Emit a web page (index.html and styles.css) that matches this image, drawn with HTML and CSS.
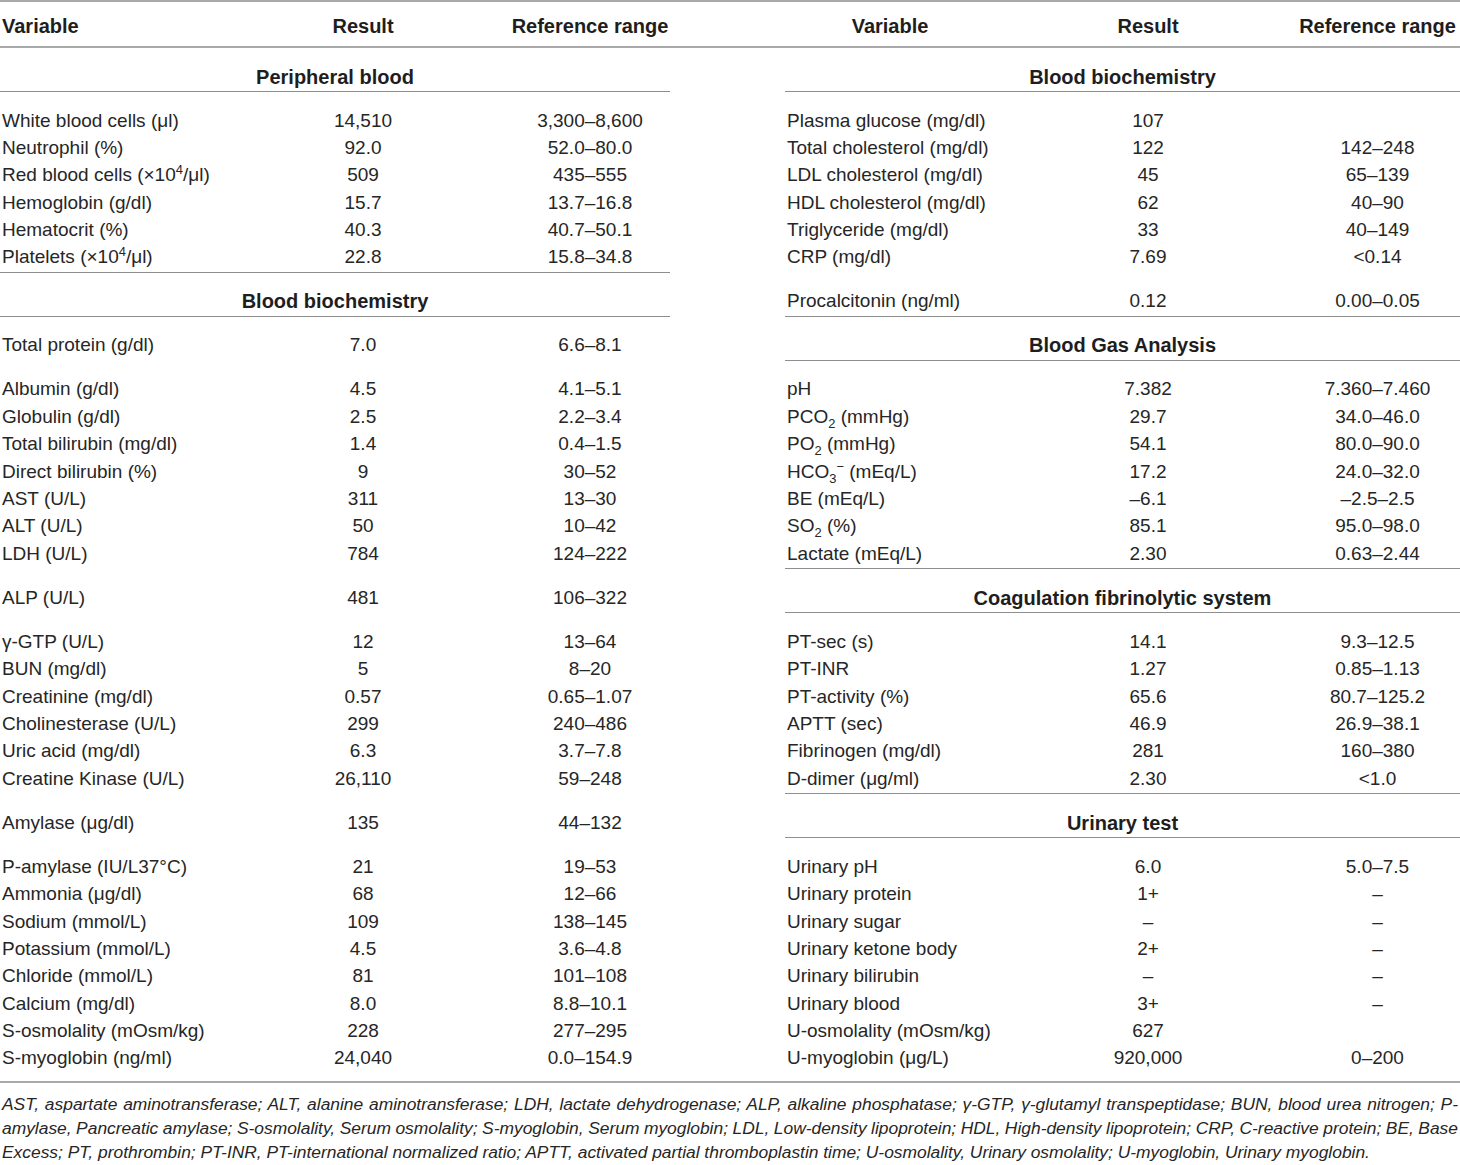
FILE: index.html
```html
<!DOCTYPE html>
<html lang="en">
<head>
<meta charset="utf-8">
<title>Laboratory findings</title>
<link rel="stylesheet" href="styles.css">
</head>
<body>
<div class="sheet">
  <div class="grid">
    <div class="row hd">
      <div class="c var">Variable</div><div class="c mid">Result</div><div class="c ref">Reference range</div>
      <div class="gap"></div>
      <div class="c var-r">Variable</div><div class="c mid">Result</div><div class="c ref">Reference range</div>
    </div>

    <div class="row t">
      <div class="c sec bb">Peripheral blood</div>
      <div class="gap"></div>
      <div class="c sec bb">Blood biochemistry</div>
    </div>

    <div class="row t">
      <div class="c var">White blood cells (μl)</div><div class="c mid">14,510</div><div class="c ref">3,300–8,600</div>
      <div class="gap"></div>
      <div class="c var">Plasma glucose (mg/dl)</div><div class="c mid">107</div><div class="c ref"></div>
    </div>
    <div class="row n">
      <div class="c var">Neutrophil (%)</div><div class="c mid">92.0</div><div class="c ref">52.0–80.0</div>
      <div class="gap"></div>
      <div class="c var">Total cholesterol (mg/dl)</div><div class="c mid">122</div><div class="c ref">142–248</div>
    </div>
    <div class="row n">
      <div class="c var">Red blood cells (×10<sup>4</sup>/μl)</div><div class="c mid">509</div><div class="c ref">435–555</div>
      <div class="gap"></div>
      <div class="c var">LDL cholesterol (mg/dl)</div><div class="c mid">45</div><div class="c ref">65–139</div>
    </div>
    <div class="row n">
      <div class="c var">Hemoglobin (g/dl)</div><div class="c mid">15.7</div><div class="c ref">13.7–16.8</div>
      <div class="gap"></div>
      <div class="c var">HDL cholesterol (mg/dl)</div><div class="c mid">62</div><div class="c ref">40–90</div>
    </div>
    <div class="row n">
      <div class="c var">Hematocrit (%)</div><div class="c mid">40.3</div><div class="c ref">40.7–50.1</div>
      <div class="gap"></div>
      <div class="c var">Triglyceride (mg/dl)</div><div class="c mid">33</div><div class="c ref">40–149</div>
    </div>
    <div class="row n">
      <div class="c var bb">Platelets (×10<sup>4</sup>/μl)</div><div class="c mid bb">22.8</div><div class="c ref bb">15.8–34.8</div>
      <div class="gap"></div>
      <div class="c var">CRP (mg/dl)</div><div class="c mid">7.69</div><div class="c ref">&lt;0.14</div>
    </div>

    <div class="row t">
      <div class="c sec bb">Blood biochemistry</div>
      <div class="gap"></div>
      <div class="c var bb">Procalcitonin (ng/ml)</div><div class="c mid bb">0.12</div><div class="c ref bb">0.00–0.05</div>
    </div>
    <div class="row t">
      <div class="c var">Total protein (g/dl)</div><div class="c mid">7.0</div><div class="c ref">6.6–8.1</div>
      <div class="gap"></div>
      <div class="c sec bb">Blood Gas Analysis</div>
    </div>
    <div class="row t">
      <div class="c var">Albumin (g/dl)</div><div class="c mid">4.5</div><div class="c ref">4.1–5.1</div>
      <div class="gap"></div>
      <div class="c var">pH</div><div class="c mid">7.382</div><div class="c ref">7.360–7.460</div>
    </div>
    <div class="row n">
      <div class="c var">Globulin (g/dl)</div><div class="c mid">2.5</div><div class="c ref">2.2–3.4</div>
      <div class="gap"></div>
      <div class="c var">PCO<sub>2</sub> (mmHg)</div><div class="c mid">29.7</div><div class="c ref">34.0–46.0</div>
    </div>
    <div class="row n">
      <div class="c var">Total bilirubin (mg/dl)</div><div class="c mid">1.4</div><div class="c ref">0.4–1.5</div>
      <div class="gap"></div>
      <div class="c var">PO<sub>2</sub> (mmHg)</div><div class="c mid">54.1</div><div class="c ref">80.0–90.0</div>
    </div>
    <div class="row n">
      <div class="c var">Direct bilirubin (%)</div><div class="c mid">9</div><div class="c ref">30–52</div>
      <div class="gap"></div>
      <div class="c var">HCO<sub>3</sub><sup>−</sup> (mEq/L)</div><div class="c mid">17.2</div><div class="c ref">24.0–32.0</div>
    </div>
    <div class="row n">
      <div class="c var">AST (U/L)</div><div class="c mid">311</div><div class="c ref">13–30</div>
      <div class="gap"></div>
      <div class="c var">BE (mEq/L)</div><div class="c mid">–6.1</div><div class="c ref">–2.5–2.5</div>
    </div>
    <div class="row n">
      <div class="c var">ALT (U/L)</div><div class="c mid">50</div><div class="c ref">10–42</div>
      <div class="gap"></div>
      <div class="c var">SO<sub>2</sub> (%)</div><div class="c mid">85.1</div><div class="c ref">95.0–98.0</div>
    </div>
    <div class="row n">
      <div class="c var">LDH (U/L)</div><div class="c mid">784</div><div class="c ref">124–222</div>
      <div class="gap"></div>
      <div class="c var bb">Lactate (mEq/L)</div><div class="c mid bb">2.30</div><div class="c ref bb">0.63–2.44</div>
    </div>

    <div class="row t">
      <div class="c var">ALP (U/L)</div><div class="c mid">481</div><div class="c ref">106–322</div>
      <div class="gap"></div>
      <div class="c sec bb">Coagulation fibrinolytic system</div>
    </div>
    <div class="row t">
      <div class="c var">γ-GTP (U/L)</div><div class="c mid">12</div><div class="c ref">13–64</div>
      <div class="gap"></div>
      <div class="c var">PT-sec (s)</div><div class="c mid">14.1</div><div class="c ref">9.3–12.5</div>
    </div>
    <div class="row n">
      <div class="c var">BUN (mg/dl)</div><div class="c mid">5</div><div class="c ref">8–20</div>
      <div class="gap"></div>
      <div class="c var">PT-INR</div><div class="c mid">1.27</div><div class="c ref">0.85–1.13</div>
    </div>
    <div class="row n">
      <div class="c var">Creatinine (mg/dl)</div><div class="c mid">0.57</div><div class="c ref">0.65–1.07</div>
      <div class="gap"></div>
      <div class="c var">PT-activity (%)</div><div class="c mid">65.6</div><div class="c ref">80.7–125.2</div>
    </div>
    <div class="row n">
      <div class="c var">Cholinesterase (U/L)</div><div class="c mid">299</div><div class="c ref">240–486</div>
      <div class="gap"></div>
      <div class="c var">APTT (sec)</div><div class="c mid">46.9</div><div class="c ref">26.9–38.1</div>
    </div>
    <div class="row n">
      <div class="c var">Uric acid (mg/dl)</div><div class="c mid">6.3</div><div class="c ref">3.7–7.8</div>
      <div class="gap"></div>
      <div class="c var">Fibrinogen (mg/dl)</div><div class="c mid">281</div><div class="c ref">160–380</div>
    </div>
    <div class="row n">
      <div class="c var">Creatine Kinase (U/L)</div><div class="c mid">26,110</div><div class="c ref">59–248</div>
      <div class="gap"></div>
      <div class="c var bb">D-dimer (μg/ml)</div><div class="c mid bb">2.30</div><div class="c ref bb">&lt;1.0</div>
    </div>

    <div class="row t">
      <div class="c var">Amylase (μg/dl)</div><div class="c mid">135</div><div class="c ref">44–132</div>
      <div class="gap"></div>
      <div class="c sec bb">Urinary test</div>
    </div>
    <div class="row t">
      <div class="c var">P-amylase (IU/L37°C)</div><div class="c mid">21</div><div class="c ref">19–53</div>
      <div class="gap"></div>
      <div class="c var">Urinary pH</div><div class="c mid">6.0</div><div class="c ref">5.0–7.5</div>
    </div>
    <div class="row n">
      <div class="c var">Ammonia (μg/dl)</div><div class="c mid">68</div><div class="c ref">12–66</div>
      <div class="gap"></div>
      <div class="c var">Urinary protein</div><div class="c mid">1+</div><div class="c ref">–</div>
    </div>
    <div class="row n">
      <div class="c var">Sodium (mmol/L)</div><div class="c mid">109</div><div class="c ref">138–145</div>
      <div class="gap"></div>
      <div class="c var">Urinary sugar</div><div class="c mid">–</div><div class="c ref">–</div>
    </div>
    <div class="row n">
      <div class="c var">Potassium (mmol/L)</div><div class="c mid">4.5</div><div class="c ref">3.6–4.8</div>
      <div class="gap"></div>
      <div class="c var">Urinary ketone body</div><div class="c mid">2+</div><div class="c ref">–</div>
    </div>
    <div class="row n">
      <div class="c var">Chloride (mmol/L)</div><div class="c mid">81</div><div class="c ref">101–108</div>
      <div class="gap"></div>
      <div class="c var">Urinary bilirubin</div><div class="c mid">–</div><div class="c ref">–</div>
    </div>
    <div class="row n">
      <div class="c var">Calcium (mg/dl)</div><div class="c mid">8.0</div><div class="c ref">8.8–10.1</div>
      <div class="gap"></div>
      <div class="c var">Urinary blood</div><div class="c mid">3+</div><div class="c ref">–</div>
    </div>
    <div class="row n">
      <div class="c var">S-osmolality (mOsm/kg)</div><div class="c mid">228</div><div class="c ref">277–295</div>
      <div class="gap"></div>
      <div class="c var">U-osmolality (mOsm/kg)</div><div class="c mid">627</div><div class="c ref"></div>
    </div>
    <div class="row n">
      <div class="c var">S-myoglobin (ng/ml)</div><div class="c mid">24,040</div><div class="c ref">0.0–154.9</div>
      <div class="gap"></div>
      <div class="c var">U-myoglobin (μg/L)</div><div class="c mid">920,000</div><div class="c ref">0–200</div>
    </div>
  </div>

  <div class="notes">
    <div class="line j">AST, aspartate aminotransferase; ALT, alanine aminotransferase; LDH, lactate dehydrogenase; ALP, alkaline phosphatase; γ-GTP, γ-glutamyl transpeptidase; BUN, blood urea nitrogen; P-</div>
    <div class="line j">amylase, Pancreatic amylase; S-osmolality, Serum osmolality; S-myoglobin, Serum myoglobin; LDL, Low-density lipoprotein; HDL, High-density lipoprotein; CRP, C-reactive protein; BE, Base</div>
    <div class="line">Excess; PT, prothrombin; PT-INR, PT-international normalized ratio; APTT, activated partial thromboplastin time; U-osmolality, Urinary osmolality; U-myoglobin, Urinary myoglobin.</div>
  </div>
</div>
</body>
</html>
```

FILE: styles.css
```css
html, body {
  margin: 0;
  padding: 0;
  background: #ffffff;
}

body {
  font-family: "Liberation Sans", Arial, Helvetica, sans-serif;
  color: #262626;
}

.sheet {
  width: 1460px;
}

.grid {
  display: grid;
  grid-template-columns: 228px 270px 172px 115px 228px 270px 177px;
  border-top: 2px solid #a9a9a9;
  border-bottom: 2px solid #a9a9a9;
  padding-bottom: 7px;
}

.row {
  display: contents;
}

.c {
  box-sizing: border-box;
  font-size: 19px;
  line-height: 22px;
  white-space: nowrap;
}

.gap {
  box-sizing: border-box;
}

.var {
  padding-left: 2px;
  text-align: left;
}

.var-r {
  text-align: center;
  padding-right: 18px;
}

.mid {
  text-align: center;
}

.ref {
  text-align: center;
  padding-left: 12px;
}

.sec {
  grid-column: span 3;
  text-align: center;
  font-weight: bold;
  font-size: 20px;
  color: #1e1e1e;
}

.bb {
  border-bottom: 1px solid #8e8e8e;
}

.row.n > * {
  height: 27.4px;
  padding-top: 0.9px;
}

.row.t > * {
  height: 44px;
  padding-top: 17.5px;
}

.row.hd > * {
  height: 46px;
  padding-top: 13px;
  border-bottom: 2px solid #a9a9a9;
  font-weight: bold;
  font-size: 20px;
  color: #1e1e1e;
}

sup, sub {
  font-size: 0.68em;
  line-height: 0;
}

.notes {
  margin-top: 9px;
  padding: 0 2px;
  font-style: italic;
  font-size: 17.4px;
  line-height: 24px;
  color: #262626;
}

.notes .line {
  white-space: normal;
}

.notes .j {
  text-align: justify;
  text-align-last: justify;
  word-spacing: -4px;
}
```
